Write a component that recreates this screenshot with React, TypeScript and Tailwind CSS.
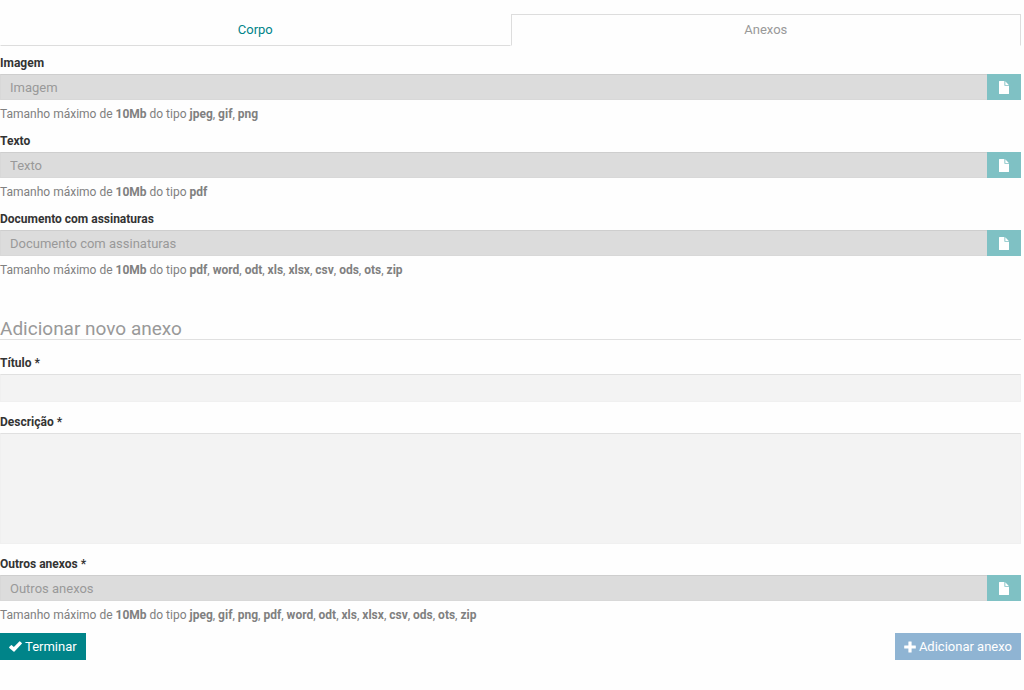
import { useState } from 'react';

type FileFieldProps = {
  id: string;
  label: string;
  required?: boolean;
  types: string[];
};

const documentTypes = ['pdf', 'word', 'odt', 'xls', 'xlsx', 'csv', 'ods', 'ots', 'zip'];

const tabs = [
  { id: 'corpo', label: 'Corpo' },
  { id: 'anexos', label: 'Anexos' },
];

function FileIcon() {
  return (
    <svg viewBox="0 0 10 13" className="w-[10px] h-[13px]" fill="currentColor" aria-hidden="true">
      <path d="M0.5 0H5.4V4.2Q5.4 4.8 6 4.8H10V12.4Q10 13 9.4 13H0.6Q0 13 0 12.4V0.5Q0 0 0.5 0Z" />
      <path d="M6.3 0.2L9.8 3.9H6.8Q6.3 3.9 6.3 3.4Z" />
    </svg>
  );
}

function CheckIcon() {
  return (
    <svg viewBox="0 0 13 11" className="w-[13px] h-[11px]" fill="currentColor" aria-hidden="true">
      <path d="M0.2 6.1L2 4.2Q2.4 3.9 2.8 4.2L4.9 6.1L10.3 0.4Q10.7 0 11.1 0.4L12.8 1.9Q13.1 2.3 12.8 2.7L5.5 10.5Q5 11 4.5 10.5L0.3 6.9Q0 6.5 0.2 6.1Z" />
    </svg>
  );
}

function PlusIcon() {
  return (
    <svg viewBox="0 0 12 12" className="w-[12px] h-[12px]" fill="currentColor" aria-hidden="true">
      <path d="M4.8 0.4H7.2Q7.6 0.4 7.6 0.8V4.4H11.4Q11.8 4.4 11.8 4.8V7.2Q11.8 7.6 11.4 7.6H7.6V11.2Q7.6 11.6 7.2 11.6H4.8Q4.4 11.6 4.4 11.2V7.6H0.6Q0.2 7.6 0.2 7.2V4.8Q0.2 4.4 0.6 4.4H4.4V0.8Q4.4 0.4 4.8 0.4Z" />
    </svg>
  );
}

function FileField({ id, label, required, types }: FileFieldProps) {
  return (
    <div>
      <label htmlFor={id} className="block mb-px text-[12px] leading-5 font-bold text-[#333]">
        {label}
        {required && ' *'}
      </label>
      <div className="flex h-[26px]">
        <input
          id={id}
          type="text"
          disabled
          placeholder={label}
          className="flex-1 min-w-0 px-[9px] pt-0.5 border border-[#d8d8d8] border-t-[#cecece] border-r-0 bg-[#dcdcdc] placeholder:text-[#999]"
        />
        <button
          type="button"
          aria-label={`Escolher ficheiro: ${label}`}
          className="flex items-center justify-center w-[34px] bg-[#7fc1c4] text-white"
        >
          <FileIcon />
        </button>
      </div>
      <p className="mt-1 text-[12px] leading-5 text-[#808080]">
        Tamanho máximo de <b>10Mb</b> do tipo{' '}
        {types.map((type, i) => (
          <span key={type}>
            {i > 0 && ', '}
            <b>{type}</b>
          </span>
        ))}
      </p>
    </div>
  );
}

export default function App() {
  const [activeTab, setActiveTab] = useState('anexos');

  return (
    <div className="min-h-screen bg-[#fefefe] pt-3.5 pr-[3px] font-['Roboto',sans-serif] text-[13px] leading-5">
      <div role="tablist" className="grid grid-cols-2">
        {tabs.map((tab) => (
          <button
            key={tab.id}
            type="button"
            role="tab"
            aria-selected={activeTab === tab.id}
            onClick={() => setActiveTab(tab.id)}
            className={
              activeTab === tab.id
                ? 'h-8 border border-[#ddd] border-b-transparent text-[#999]'
                : 'h-8 border border-transparent border-b-[#ddd] text-[#008489]'
            }
          >
            {tab.label}
          </button>
        ))}
      </div>

      <form onSubmit={(e) => e.preventDefault()}>
        <div className="flex flex-col gap-[7px] pt-[7px]">
          <FileField id="imagem" label="Imagem" types={['jpeg', 'gif', 'png']} />
          <FileField id="texto" label="Texto" types={['pdf']} />
          <FileField id="assinaturas" label="Documento com assinaturas" types={documentTypes} />
        </div>

        <h2 className="mt-[39px] mb-[13px] border-b border-[#e0e0e0] text-[19px] leading-5 text-[#999]">
          Adicionar novo anexo
        </h2>

        <div className="flex flex-col gap-2.5">
          <div>
            <label htmlFor="titulo" className="block mb-px text-[12px] leading-5 font-bold text-[#333]">
              Título *
            </label>
            <input
              id="titulo"
              type="text"
              className="block w-full h-7 px-[9px] border border-[#f0f0f0] border-t-[#e0e0e0] bg-[#f3f3f3]"
            />
          </div>
          <div>
            <label htmlFor="descricao" className="block mb-px text-[12px] leading-5 font-bold text-[#333]">
              Descrição *
            </label>
            <textarea
              id="descricao"
              className="block w-full h-[111px] px-[9px] py-1 resize-none border border-[#f0f0f0] border-t-[#e0e0e0] bg-[#f3f3f3]"
            />
          </div>
          <FileField id="outros" label="Outros anexos" required types={['jpeg', 'gif', 'png', ...documentTypes]} />
        </div>

        <div className="flex justify-between mt-2">
          <button type="submit" className="flex items-center gap-[3px] h-[27px] px-[9px] bg-[#008489] text-white">
            <CheckIcon />
            Terminar
          </button>
          <button type="button" className="flex items-center gap-[3px] h-[27px] px-[9px] bg-[#8fb4d3] text-white">
            <PlusIcon />
            Adicionar anexo
          </button>
        </div>
      </form>
    </div>
  );
}
